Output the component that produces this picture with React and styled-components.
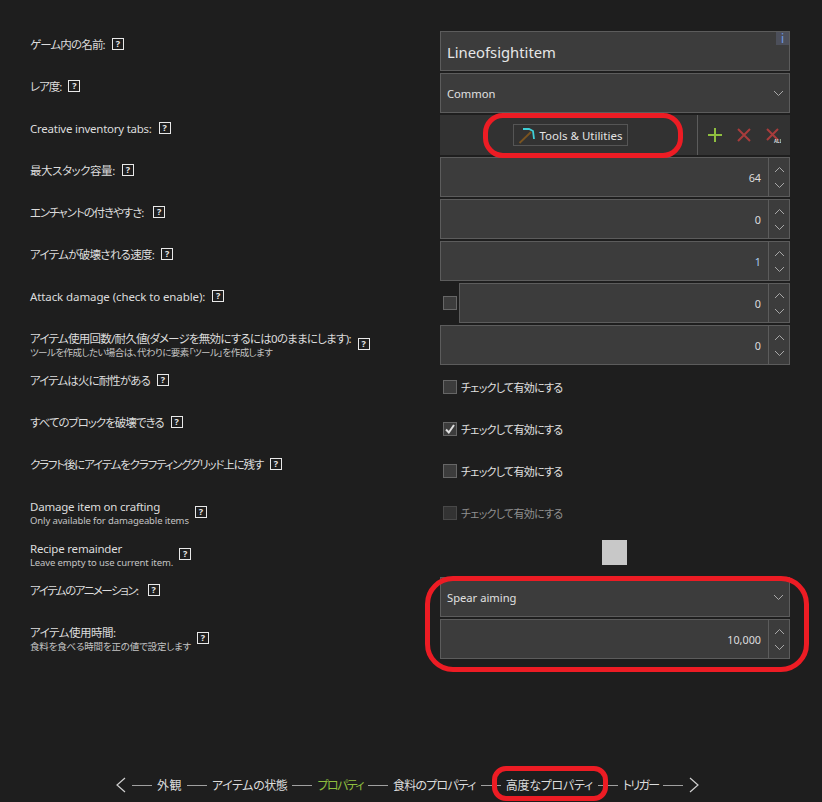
import React from "react";
import styled, { createGlobalStyle } from "styled-components";

const GlobalStyle = createGlobalStyle`
  html, body { margin: 0; padding: 0; background: #1e1e1e; }
  body {
    font-family: "Noto Sans", "Noto Sans CJK JP", sans-serif;
    font-size: 12px;
    color: #e0e0e0;
    font-feature-settings: "palt";
  }
`;

const Page = styled.div`
  position: relative;
  width: 822px;
  height: 802px;
  overflow: hidden;
  display: flex;
  flex-direction: column;
  padding-top: 31px;
  box-sizing: border-box;
`;

const Form = styled.div`
  display: flex;
  flex-direction: column;
  gap: 2px;
  padding-left: 30px;
`;

const Row = styled.div`
  display: grid;
  grid-template-columns: 410px 350px;
  height: 40px;
`;

const LabelCell = styled.div`
  display: flex;
  align-items: flex-start;
  gap: ${({ $gap }) => $gap || 7}px;
  padding-top: 7px;
`;

const LabelText = styled.div`
  display: flex;
  flex-direction: column;
  line-height: 14px;
  font-size: 11.5px;
  letter-spacing: ${({ $track }) => $track || 0}px;
  color: #dcdcdc;
  white-space: nowrap;
`;

const SubText = styled.span`
  font-size: 9.5px;
  line-height: 14px;
  letter-spacing: ${({ $track }) => $track || 0}px;
  color: #c4c4c4;
`;

const Help = styled.span`
  flex: none;
  width: 10px;
  height: 10px;
  margin-top: ${({ $sub }) => ($sub ? "6px" : "0")};
  border: 1px solid #e8e8e8;
  font-size: 9px;
  line-height: 10px;
  font-weight: 700;
  text-align: center;
  letter-spacing: 0;
  color: #e8e8e8;
`;

const Field = styled.div`
  position: relative;
  box-sizing: border-box;
  height: 40px;
  flex: 1;
  display: flex;
  align-items: center;
  justify-content: space-between;
  background: #3c3c3c;
  border: 1px solid #5c5c5c;
  padding-left: 6px;
  font-size: 11.2px;
`;

const NameInput = styled.span`
  font-size: 14.8px;
  padding-top: 2px;
  color: #e6e6e6;
`;

const InfoBadge = styled.span`
  position: absolute;
  top: 0;
  right: 0;
  width: 13px;
  height: 13px;
  background: #4c4f5a;
  color: #6f9bea;
  font-size: 12px;
  line-height: 13px;
  text-align: center;
`;

const Value = styled.span`
  flex: 1;
  text-align: right;
  padding-right: 7px;
  font-size: 10.8px;
  color: ${({ $blue }) => ($blue ? "#a9cdf2" : "#dedede")};
`;

const Spinner = styled.div`
  align-self: stretch;
  width: 20px;
  border-left: 1px solid #5c5c5c;
  display: flex;
  flex-direction: column;
  align-items: center;
  justify-content: center;
  gap: 9px;
`;

const Chevron = ({ up }) => (
  <svg width="11" height="7" viewBox="0 0 11 7" fill="none" stroke="#a8a8a8" strokeWidth="1">
    <path d={up ? "M1 6L5.5 1.5L10 6" : "M1 1L5.5 5.5L10 1"} />
  </svg>
);

const Arrow = styled.span`
  display: flex;
  margin-right: 5px;
`;

const Toolbar = styled.div`
  height: 40px;
  display: flex;
  align-items: stretch;
  background: #323232;
`;

const TabArea = styled.div`
  width: 258px;
  display: flex;
  align-items: center;
  justify-content: center;
  padding-left: 3px;
  box-sizing: border-box;
  border-right: 1px solid #5c5c5c;
`;

const TabChip = styled.div`
  display: flex;
  align-items: center;
  gap: 5px;
  height: 22px;
  width: 115px;
  box-sizing: border-box;
  padding-left: 4px;
  border: 1px solid #555;
  font-size: 11.5px;
  color: #e4e4e4;
  white-space: nowrap;
`;

const ToolButtons = styled.div`
  flex: 1;
  display: flex;
  align-items: center;
  justify-content: space-around;
  padding: 0 3px 0 2px;
`;

const ToolIcon = styled.svg`
  display: block;
`;

const CheckRow = styled.div`
  display: flex;
  align-items: center;
  gap: 4px;
  height: 40px;
  padding-left: 3px;
  font-size: 11px;
  letter-spacing: -0.7px;
  color: ${({ $disabled }) => ($disabled ? "#8f8f8f" : "#e0e0e0")};
`;

const Box = styled.span`
  flex: none;
  box-sizing: border-box;
  width: 14px;
  height: 14px;
  background: ${({ $disabled }) => ($disabled ? "#333" : "#3c3c3c")};
  border: 1px solid ${({ $disabled }) => ($disabled ? "#484848" : "#666")};
  display: flex;
  align-items: center;
  justify-content: center;
`;

const AttackCell = styled.div`
  display: flex;
  align-items: center;
  padding-left: 3px;
  gap: 2px;
`;

const Swatch = styled.div`
  width: 25px;
  height: 25px;
  margin: 5px 0 0 162px;
  background: #c8c8c8;
`;

const Nav = styled.div`
  margin-top: auto;
  margin-left: 114px;
  height: 34px;
  display: flex;
  align-items: center;
  gap: 5px;
  font-size: 12px;
  color: #dcdcdc;
`;

const NavLine = styled.span`
  width: 20px;
  height: 1px;
  background: #a0a0a0;
`;

const NavItem = styled.span`
  white-space: nowrap;
  letter-spacing: ${({ $track }) => $track}px;
  color: ${({ $active }) => ($active ? "#8fbf3f" : "#dcdcdc")};
`;

const NavArrow = styled.svg`
  flex: none;
  margin: 0 1px;
`;

const Annotation = styled.div`
  position: absolute;
  box-sizing: border-box;
  left: ${({ $x }) => $x}px;
  top: ${({ $y }) => $y}px;
  width: ${({ $w }) => $w}px;
  height: ${({ $h }) => $h}px;
  border: 5px solid #ed1c24;
  border-radius: ${({ $r }) => $r}px;
  pointer-events: none;
`;

const Label = ({ text, sub, track, subTrack, gap }) => (
  <LabelCell $gap={gap}>
    <LabelText $track={track}>
      {text}
      {sub && <SubText $track={subTrack}>{sub}</SubText>}
    </LabelText>
    <Help $sub={!!sub}>?</Help>
  </LabelCell>
);

const NumberField = ({ value, blue }) => (
  <Field>
    <Value $blue={blue}>{value}</Value>
    <Spinner>
      <Chevron up />
      <Chevron />
    </Spinner>
  </Field>
);

const SelectField = ({ value }) => (
  <Field>
    <span>{value}</span>
    <Arrow>
      <Chevron />
    </Arrow>
  </Field>
);

const CheckField = ({ checked, disabled }) => (
  <CheckRow $disabled={disabled}>
    <Box $disabled={disabled}>
      {checked && (
        <svg width="12" height="12" viewBox="0 0 12 12" fill="none" stroke="#e0e0e0" strokeWidth="2">
          <path d="M2 6.5L4.8 9.5L10 2" />
        </svg>
      )}
    </Box>
    チェックして有効にする
  </CheckRow>
);

const Pickaxe = () => (
  <svg width="17" height="17" viewBox="0 0 17 17" fill="none">
    <path d="M1.5 16L13 5" stroke="#7a5420" strokeWidth="1.8" />
    <path d="M5 2H11L15 4L16 12" stroke="#3fd0d8" strokeWidth="1.8" />
  </svg>
);

const navItems = [
  { text: "外観", track: 0.5 },
  { text: "アイテムの状態", track: -0.4 },
  { text: "プロパティ", track: -1.6 },
  { text: "食料のプロパティ", track: -0.8 },
  { text: "高度なプロパティ", track: -0.25 },
  { text: "トリガー", track: -1.7 },
];

export default function App() {
  return (
    <Page>
      <GlobalStyle />
      <Form>
        <Row>
          <Label text="ゲーム内の名前:" track={-0.85} />
          <Field>
            <NameInput>Lineofsightitem</NameInput>
            <InfoBadge>i</InfoBadge>
          </Field>
        </Row>
        <Row>
          <Label text="レア度:" track={-1} />
          <SelectField value="Common" />
        </Row>
        <Row>
          <Label text="Creative inventory tabs:" track={-0.25} />
          <Toolbar>
            <TabArea>
              <TabChip>
                <Pickaxe />
                Tools &amp; Utilities
              </TabChip>
            </TabArea>
            <ToolButtons>
              <ToolIcon width="16" height="16" viewBox="0 0 16 16" stroke="#8fbf3f" strokeWidth="2">
                <path d="M8 1V15M1 8H15" />
              </ToolIcon>
              <ToolIcon width="16" height="16" viewBox="0 0 16 16" stroke="#a83c3c" strokeWidth="2">
                <path d="M2 2L14 14M14 2L2 14" />
              </ToolIcon>
              <ToolIcon width="16" height="16" viewBox="0 0 16 16" stroke="#a83c3c" strokeWidth="2">
                <path d="M2 2L13 13M13 2L2 13" />
                <text x="9" y="15.5" fontSize="4.5" fontWeight="700" fill="#d8d8d8" stroke="none">ALL</text>
              </ToolIcon>
            </ToolButtons>
          </Toolbar>
        </Row>
        <Row>
          <Label text="最大スタック容量:" track={-0.45} />
          <NumberField value="64" />
        </Row>
        <Row>
          <Label text="エンチャントの付きやすさ:" track={-1.08} gap={10} />
          <NumberField value="0" />
        </Row>
        <Row>
          <Label text="アイテムが破壊される速度:" track={-0.7} />
          <NumberField value="1" blue />
        </Row>
        <Row>
          <Label text="Attack damage (check to enable):" track={-0.1} />
          <AttackCell>
            <Box />
            <NumberField value="0" />
          </AttackCell>
        </Row>
        <Row>
          <Label
            text="アイテム使用回数/耐久値(ダメージを無効にするには0のままにします):"
            sub="ツールを作成したい場合は、代わりに要素「ツール」を作成します"
            track={-0.75}
            subTrack={-0.55}
          />
          <NumberField value="0" />
        </Row>
        <Row>
          <Label text="アイテムは火に耐性がある" track={-0.9} />
          <CheckField />
        </Row>
        <Row>
          <Label text="すべてのブロックを破壊できる" track={-1} />
          <CheckField checked />
        </Row>
        <Row>
          <Label text="クラフト後にアイテムをクラフティンググリッド上に残す" track={-1.2} />
          <CheckField />
        </Row>
        <Row>
          <Label
            text="Damage item on crafting"
            sub="Only available for damageable items"
            track={-0.2}
            subTrack={-0.12}
            gap={6}
          />
          <CheckField disabled />
        </Row>
        <Row>
          <Label
            text="Recipe remainder"
            sub="Leave empty to use current item."
            track={-0.2}
            subTrack={-0.12}
            gap={6}
          />
          <div>
            <Swatch />
          </div>
        </Row>
        <Row>
          <Label text="アイテムのアニメーション:" track={-1.46} gap={10} />
          <SelectField value="Spear aiming" />
        </Row>
        <Row>
          <Label
            text="アイテム使用時間:"
            sub="食料を食べる時間を正の値で設定します"
            track={-0.5}
            subTrack={-0.2}
            gap={6}
          />
          <NumberField value="10,000" />
        </Row>
      </Form>
      <Nav>
        <NavArrow width="11" height="16" viewBox="0 0 11 16" fill="none" stroke="#d0d0d0" strokeWidth="1.2">
          <path d="M10 1L2 8L10 15" />
        </NavArrow>
        {navItems.map((item) => (
          <React.Fragment key={item.text}>
            <NavLine />
            <NavItem $track={item.track} $active={item.text === "プロパティ"}>
              {item.text}
            </NavItem>
          </React.Fragment>
        ))}
        <NavLine />
        <NavArrow width="11" height="16" viewBox="0 0 11 16" fill="none" stroke="#d0d0d0" strokeWidth="1.2">
          <path d="M1 1L9 8L1 15" />
        </NavArrow>
      </Nav>
      <Annotation $x={483} $y={113} $w={200} $h={45} $r={20} />
      <Annotation $x={425} $y={576} $w={384} $h={96} $r={28} />
      <Annotation $x={492} $y={766} $w={116} $h={35} $r={14} />
    </Page>
  );
}
